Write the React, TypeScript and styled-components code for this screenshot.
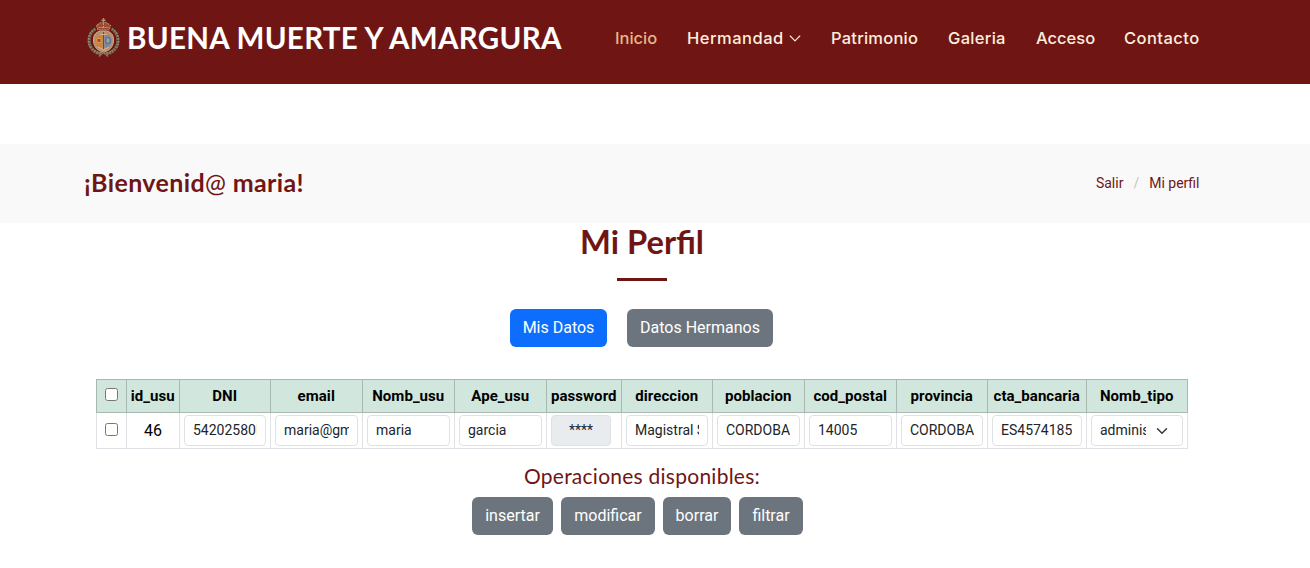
import React from 'react';
import styled, { createGlobalStyle } from 'styled-components';

const Global = createGlobalStyle`
  *, *::before, *::after { box-sizing: border-box; }
  body {
    margin: 0;
    background: #fff;
    color: #000;
    font: 400 16px/24px Roboto, sans-serif;
    overflow: hidden;
  }
`;

const wine = '#6f1615';

const Container = styled.div`
  width: 1140px;
  margin-left: 72px;
  padding: 0 12px;
`;

const Header = styled.header`
  height: 84px;
  background: ${wine};
`;

const HeaderRow = styled(Container)`
  display: flex;
  align-items: center;
  justify-content: space-between;
  height: 76px;
`;

const Brand = styled.a`
  display: flex;
  align-items: center;
  gap: 7px;
  padding-left: 3px;
  color: #fff;
`;

const BrandName = styled.h1`
  margin: 0;
  font: 700 29.5px/36px Lato, sans-serif;
  letter-spacing: 0.3px;
  white-space: nowrap;
`;

const Nav = styled.nav`
  display: flex;
  align-items: center;
  gap: 30px;
`;

const NavLink = styled.a<{ $width: number; $active?: boolean; $spacing?: number }>`
  display: flex;
  align-items: center;
  justify-content: space-between;
  width: ${(p) => p.$width}px;
  color: ${(p) => (p.$active ? '#e6b981' : '#fdeedb')};
  font: 500 16.5px/24px Inter, sans-serif;
  letter-spacing: ${(p) => p.$spacing ?? 0}px;
  white-space: nowrap;
`;

const Crumbs = styled.section`
  margin-top: 60px;
  height: 79px;
  background: #f9f9f9;
`;

const CrumbsRow = styled(Container)`
  display: flex;
  align-items: center;
  justify-content: space-between;
  height: 78px;
  padding-right: 12.5px;
  color: ${wine};
`;

const Welcome = styled.h2`
  margin: 0;
  padding-bottom: 2px;
  font: 700 25px/30px Lato, sans-serif;
  letter-spacing: 0.37px;
  white-space: nowrap;
`;

const At = styled.span`
  font-weight: 400;
`;

const Trail = styled.div`
  display: flex;
  gap: 10px;
  font-size: 14px;
  line-height: 21px;
`;

const Slash = styled.span`
  color: #c5c5c5;
`;

const Main = styled(Container)`
  display: flex;
  flex-direction: column;
  align-items: center;
`;

const Title = styled.h2`
  margin: 0;
  font: 700 32.7px/37px Lato, sans-serif;
  color: ${wine};
`;

const Rule = styled.div`
  width: 50px;
  height: 3px;
  margin: 18px 0 28px;
  background: ${wine};
`;

const ButtonRow = styled.div<{ $gap: number; $shift?: number }>`
  display: flex;
  gap: ${(p) => p.$gap}px;
  margin-right: ${(p) => p.$shift ?? 0}px;
`;

const Button = styled.button<{ $width: number; $primary?: boolean }>`
  width: ${(p) => p.$width}px;
  height: 38px;
  padding: 0;
  border: 0;
  border-radius: 6px;
  background: ${(p) => (p.$primary ? '#0d6efd' : '#6c757d')};
  color: #fff;
  font: 400 16px/24px Roboto, sans-serif;
  white-space: nowrap;
`;

const Table = styled.table`
  width: 1092px;
  margin: 32px 0 15px;
  border-collapse: collapse;
  table-layout: fixed;
`;

const Col = styled.col<{ $width: number }>`
  width: ${(p) => p.$width}px;
`;

const Th = styled.th`
  height: 33px;
  padding: 0 0.5px 0 0;
  border: 1px solid #a7b9b1;
  background: #d1e7dd;
  font: 700 15px/24px Roboto, sans-serif;
  letter-spacing: 0.05px;
  text-align: center;
  white-space: nowrap;
`;

const Td = styled.td`
  height: 36px;
  padding: 0 4px;
  border: 1px solid #dee2e6;
  text-align: center;
`;

const Check = styled.input<{ $lift: number }>`
  display: block;
  width: 13px;
  height: 13px;
  margin: 0 auto ${(p) => p.$lift}px;
`;

const Field = styled.div<{ $disabled?: boolean }>`
  display: flex;
  align-items: center;
  width: ${(p) => (p.$disabled ? '60px' : '100%')};
  height: 31px;
  padding: 0 8px;
  border: 1px solid #dee2e6;
  border-radius: 4px;
  background: ${(p) => (p.$disabled ? '#e9ecef' : '#fff')};
  color: #212529;
  font-size: 14px;
  line-height: 21px;
  justify-content: ${(p) => (p.$disabled ? 'center' : 'flex-start')};
`;

const Value = styled.span<{ $width?: number }>`
  flex: 0 1 auto;
  min-width: 0;
  width: ${(p) => (p.$width ? `${p.$width}px` : 'auto')};
  overflow: hidden;
  white-space: nowrap;
  text-align: left;
`;

const Arrow = styled.svg`
  margin-left: 10px;
  flex: none;
`;

const Operations = styled.h5`
  margin: 0 0 9px;
  color: ${wine};
  font: 400 21px/24px Lato, sans-serif;
  letter-spacing: 0.25px;
  white-space: nowrap;
`;

const Crest = () => (
  <svg width="33" height="40" viewBox="0 0 33 40" fill="none">
    <path d="M16.5 0v5M14.5 2.2h4" stroke="#b58a7a" strokeWidth="1.4" />
    <path d="M11 12 9.5 7.5l3.5-2.5 3.5-1 3.5 1 3.5 2.5L22 12z" fill="#9a4a35" stroke="#b08a60" strokeWidth="1.2" strokeDasharray="2 .8" />
    <path d="M11.5 9.5h10M16.5 5v6" stroke="#cb9a60" strokeWidth="1" strokeDasharray="2 1" />
    <path d="M8.5 11C2 14 0 24 4.500 30c2.5 4 6 5.5 10 6M24.5 11C31 14 33 24 28.5 30c-2.5 4-6 5.5-10 6" stroke="#7a7a60" strokeWidth="3" strokeDasharray="2.2 .6" />
    <path d="M6 12C0 18 0 25 4 31M27 12c6 6 6 13 2 19" stroke="#a29a86" strokeWidth="1" strokeDasharray="1.2 1.8" />
    <path d="M16.5 13C9 12.5 6 17 6.5 23s4 10 10 11c6-1 9.500-5 10-11s-2.5-10.5-10-10z" fill="#b98d6c" stroke="#c6ad8d" />
    <path d="M15.500 17c-4-1-7 1.500-7 6 0 4 3 7 7 7z" fill="#cf8040" />
    <path d="M17.500 17c4-1 7 1.500 7 6 0 4-3 7-7 7z" fill="#7488ab" />
    <path d="M10 20.500h4v4h-4z" fill="#b83a35" stroke="#d9a548" strokeWidth=".9" />
    <ellipse cx="21" cy="22.500" rx="2.300" ry="3" fill="#b5a06c" stroke="#4772b0" strokeWidth="1.200" />
    <path d="M16.500 14v18" stroke="#6f4a42" strokeWidth="1" />
    <path d="M13 16.500h7M11 29l5.500 3 5.500-3" stroke="#d0b08d" strokeWidth="1.200" />
    <path d="m7 32 5 3 4.500-1 4.500 1 5-3M12 38.500l4.500-4 4.500 4" stroke="#98806c" strokeWidth="1.300" strokeDasharray="2.500 .7" />
  </svg>
);

const columns: [string, number][] = [
  ['id_usu', 53],
  ['DNI', 91],
  ['email', 92],
  ['Nomb_usu', 92],
  ['Ape_usu', 92],
  ['password', 75],
  ['direccion', 91],
  ['poblacion', 92],
  ['cod_postal', 92],
  ['provincia', 91],
  ['cta_bancaria', 99],
  ['Nomb_tipo', 101],
];

const values = [
  '54202580L',
  'maria@gmail.com',
  'maria',
  'garcia',
  '****',
  'Magistral Seco',
  'CORDOBA',
  '14005',
  'CORDOBA',
  'ES4574185',
];

export default function App() {
  return (
    <>
      <Global />
      <Header>
        <HeaderRow>
          <Brand>
            <Crest />
            <BrandName>BUENA MUERTE Y AMARGURA</BrandName>
          </Brand>
          <Nav>
            <NavLink $width={42} $active>Inicio</NavLink>
            <NavLink $width={114} $spacing={0.5}>
              Hermandad
              <svg width="12" height="12" viewBox="0 0 12 12" fill="none">
                <path d="m1.2 4 4.8 4.8L10.8 4" stroke="#fdeedb" strokeWidth="1.1" strokeLinecap="round" strokeLinejoin="round" />
              </svg>
            </NavLink>
            <NavLink $width={87} $spacing={0.22}>Patrimonio</NavLink>
            <NavLink $width={58} $spacing={0.3}>Galeria</NavLink>
            <NavLink $width={58} $spacing={0}>Acceso</NavLink>
            <NavLink $width={76} $spacing={0.45}>Contacto</NavLink>
          </Nav>
        </HeaderRow>
      </Header>
      <Crumbs>
        <CrumbsRow>
          <Welcome>¡Bienvenid<At>@</At> maria!</Welcome>
          <Trail>
            <span>Salir</span>
            <Slash>/</Slash>
            <span>Mi perfil</span>
          </Trail>
        </CrumbsRow>
      </Crumbs>
      <Main>
        <Title>Mi Perfil</Title>
        <Rule />
        <ButtonRow $gap={20} $shift={1}>
          <Button $width={97} $primary>Mis Datos</Button>
          <Button $width={146}>Datos Hermanos</Button>
        </ButtonRow>
        <Table>
          <colgroup>
            <Col $width={30} />
            {columns.map(([name, width]) => (
              <Col key={name} $width={width} />
            ))}
          </colgroup>
          <thead>
            <tr>
              <Th><Check type="checkbox" $lift={3} /></Th>
              {columns.map(([name]) => (
                <Th key={name}>{name}</Th>
              ))}
            </tr>
          </thead>
          <tbody>
            <tr>
              <Td><Check type="checkbox" $lift={2} /></Td>
              <Td>46</Td>
              {values.map((value, i) => (
                <Td key={i}>
                  <Field $disabled={value === '****'}>
                    <Value>{value}</Value>
                  </Field>
                </Td>
              ))}
              <Td>
                <Field>
                  <Value $width={46}>administrador</Value>
                  <Arrow width="12" height="12" viewBox="0 0 16 16" fill="none">
                    <path d="m2 5 6 6 6-6" stroke="#343a40" strokeWidth="2" strokeLinecap="round" strokeLinejoin="round" />
                  </Arrow>
                </Field>
              </Td>
            </tr>
          </tbody>
        </Table>
        <Operations>Operaciones disponibles:</Operations>
        <ButtonRow $gap={8} $shift={9}>
          <Button $width={81}>insertar</Button>
          <Button $width={94}>modificar</Button>
          <Button $width={68}>borrar</Button>
          <Button $width={64}>filtrar</Button>
        </ButtonRow>
      </Main>
    </>
  );
}
